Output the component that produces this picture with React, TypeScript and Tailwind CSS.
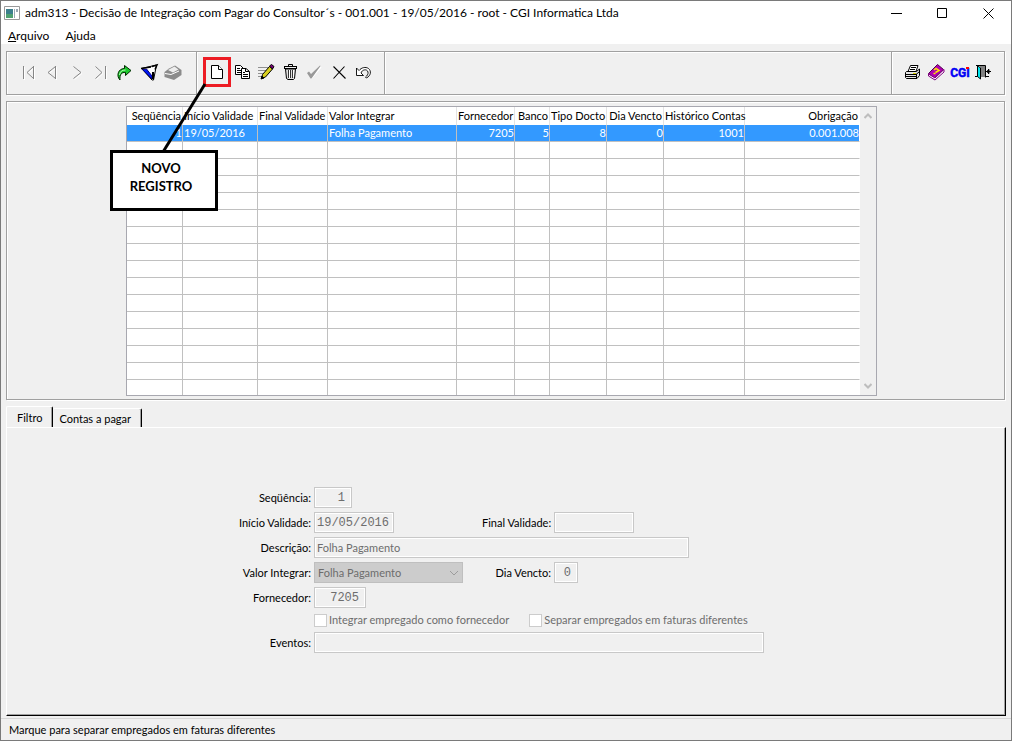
import React, { useState } from 'react';

interface Column {
  label: string;
  width: string;
  numeric?: boolean;
}

interface IconButtonProps {
  label: string;
  children: React.ReactNode;
  highlighted?: boolean;
}

const columns: Column[] = [
  { label: 'Seqüência', width: 'w-[56px]', numeric: true },
  { label: 'Início Validade', width: 'w-[75px]' },
  { label: 'Final Validade', width: 'w-[70px]' },
  { label: 'Valor Integrar', width: 'w-[129px]' },
  { label: 'Fornecedor', width: 'w-[58px]', numeric: true },
  { label: 'Banco', width: 'w-[35px]', numeric: true },
  { label: 'Tipo Docto', width: 'w-[57px]', numeric: true },
  { label: 'Dia Vencto', width: 'w-[57px]', numeric: true },
  { label: 'Histórico Contas', width: 'w-[81px]', numeric: true },
  { label: 'Obrigação', width: 'w-[115px]', numeric: true },
];

const records: string[][] = [
  ['1', '19/05/2016', '', 'Folha Pagamento', '7205', '5', '8', '0', '1001', '0.001.008'],
];

const VISIBLE_ROWS = 16;

const fieldClass =
  'block h-[21px] border border-[#c8c8c8] bg-[#f0f0f0] px-0.5 text-[#6d6d6d] shadow-[inset_0_0_0_1px_#fff]';
const monoClass = "font-['Liberation_Mono',monospace] text-[12px]";

const IconButton: React.FC<IconButtonProps> = ({ label, children, highlighted }) => (
  <button type="button" aria-label={label} className="relative block h-6 w-6">
    <svg viewBox="0 0 24 24" className="h-6 w-6" fill="none" stroke="#000">
      {children}
    </svg>
    {highlighted && <span className="absolute -inset-y-[3px] -right-px -left-[3px] border-3 border-[#ed1c24]" />}
  </button>
);

const NavIcon = ({ d }: { d: string }) => (
  <>
    <path d={d} stroke="#fff" transform="translate(1 1)" />
    <path d={d} stroke="#868686" />
  </>
);

const NavigationTools = () => (
  <div className="flex items-center border-r border-[#a0a0a0] pr-3 pb-0.5 pl-[9px] shadow-[1px_0_0_#fff]">
    <IconButton label="Primeiro">
      <NavIcon d="M7.500 6v13M17.500 6v13M17.500 6.500L11 12.500L17.500 18.500" />
    </IconButton>
    <IconButton label="Anterior">
      <NavIcon d="M15.500 6v13M15.500 6.500L8 12.500L15.500 18.500" />
    </IconButton>
    <IconButton label="Próximo">
      <NavIcon d="M9.500 6.500L17 12.500L9.500 18.500" />
    </IconButton>
    <IconButton label="Último">
      <NavIcon d="M7.500 6.500L14 12.500L7.500 18.500M17.500 6v13" />
    </IconButton>
    <IconButton label="Atualizar">
      <path
        d="M8 20C4 16 6 8.500 12.500 8.500V5.500L19 10.500L13.500 15.500V12.500C9.500 12 7.500 14.500 8 20Z"
        fill="#1ec92e"
        stroke="#002a00"
      />
      <path d="M7.500 15C8 11.500 10 10 13.500 10" stroke="#b4ffb4" />
    </IconButton>
    <IconButton label="Filtrar">
      <path d="M5.500 8.500L20.500 5L17.500 20H16Z" fill="#fff" />
      <path d="M6.500 9.500L10.500 9L16 16V19Z" fill="#0018f0" stroke="#000080" />
      <path d="M17 12v7" strokeWidth="2" />
      <path d="M16 6.500L21 5L19 9.500" strokeWidth="1.500" />
      <path d="M5 8.500L15 7" strokeWidth="1.500" />
    </IconButton>
    <IconButton label="Imprimir seleção">
      <path d="M4.500 12L9 8.500L15 5.500L21.500 10V15L14 20L4.500 17Z" fill="#8b8b8b" stroke="none" />
      <path d="M8 10L14.500 6.500L18.500 9.500L13 12.500Z" fill="#ededed" stroke="none" />
      <path d="M5 13.500L11 14.500L19 11" stroke="#fff" />
    </IconButton>
  </div>
);

const EditTools = () => (
  <div className="flex items-center border-r border-[#a0a0a0] pr-2.5 pb-0.5 pl-[9px] shadow-[1px_0_0_#fff]">
    <IconButton label="Novo registro" highlighted>
      <path d="M5.500 5.500H12.500L16.500 9.500V18.500H5.500Z" fill="#fff" />
      <path d="M12.500 5.500V9.500H16.500" fill="#fff" />
    </IconButton>
    <IconButton label="Copiar">
      <path d="M5.500 5.500H10.500L13.500 8.500V14.500H5.500Z" fill="#fff" />
      <path d="M7 8.500h3M7 10.500h4M7 12.500h4" />
      <path d="M11.500 8.500H16L19.500 11.500V18.500H11.500Z" fill="#fff" />
      <path d="M15.500 8.500V11.500H19M13 12.500h2M13 14.500h5M13 16.500h5" />
    </IconButton>
    <IconButton label="Editar">
      <path d="M4 7.500h10M4 10.500h9M4 13.500h7M4 16.500h5" stroke="#909090" />
      <path d="M7.500 18.500L8.500 14.500L15.500 6.500L18.500 9L11.500 17Z" fill="#d8d020" />
      <path d="M15.500 6L17.500 4.500L20 6.500L18.500 9Z" fill="#7a007a" />
      <path d="M7 19l3-1-2-2z" fill="#000" />
    </IconButton>
    <IconButton label="Excluir">
      <path d="M10.500 6V4.500H14.500V6M6 6.500H19M6 8.500H19M18.500 6v3M6.500 6v3" />
      <path d="M7.500 9L8.500 18.500L10 19.500H15.500L16.500 18.500L17.500 9Z" fill="#e0e0e0" />
      <path d="M10.500 10v8M12.500 10v8M14.500 10v8" stroke="#333" />
      <path d="M11.500 10v8M15.500 10v7" stroke="#fff" />
    </IconButton>
    <IconButton label="Confirmar">
      <path d="M6.500 14L9.500 18L19 7" stroke="#fff" strokeWidth="1.500" />
      <path d="M5 13L7 11.500L9 14L18 5.500L18.500 6L9.500 18.500L8.500 18.500Z" fill="#999" stroke="none" />
    </IconButton>
    <IconButton label="Cancelar">
      <path d="M7.500 6.500L19.500 18.500M18.500 6.500L7.500 18.500" strokeWidth="1.100" />
    </IconButton>
    <IconButton label="Desfazer">
      <path
        d="M6.500 8v7.500H13.500L11 13C12 9.500 17 8.500 18 12C18.500 14 17 16 15.500 17L16.500 18C21 15.500 21.500 11 18.500 8.500C15.500 6.500 11.500 7.500 9 10.500Z"
        fill="#fff"
        strokeWidth=".9"
      />
    </IconButton>
  </div>
);

const SystemTools = () => (
  <div className="flex items-center border-l border-[#a0a0a0] px-2 pb-0.5 shadow-[inset_1px_0_0_#fff]">
    <IconButton label="Imprimir">
      <path d="M8 11.500L10.500 5.500H18L16 11.500Z" fill="#fff" />
      <path d="M11 7.500h5M10 9.500h5" />
      <path d="M6.500 11.500H16.500L19.500 9V15.500L17 18.500H6.500L5.500 17.500V12.500Z" fill="#e6e6e6" />
      <path d="M6 14.500H16L19 12M16.500 14v4M6 16.500H16" />
      <path d="M13 13.500h3" stroke="#d8d000" />
    </IconButton>
    <IconButton label="Ajuda">
      <path d="M4.500 13.500L13.500 4.500L19.500 9.500L10.500 18Z" fill="#b000b0" stroke="#500050" />
      <path d="M4.500 14V16L11 20L20 12V9.500L11 18Z" fill="#fff" stroke="#800080" />
      <path d="M10 10L12 8.500L15 10.500L11.500 12.500M9.500 13.500h2" stroke="#ffe800" strokeWidth="1.500" />
    </IconButton>
    <IconButton label="CGI">
      <text
        x="12"
        y="17"
        textAnchor="middle"
        className="font-['Roboto',sans-serif] text-[12px] font-bold"
        fill="#0000f5"
        stroke="#0000f5"
        strokeWidth=".5"
      >
        CGI
      </text>
      <path d="M18 7h3v2h-3z" fill="#f00" stroke="none" />
    </IconButton>
    <IconButton label="Sair">
      <path d="M4 5.500H13.500V17.500M3 16.500H17" />
      <path d="M8 6H13V17H8Z" fill="#808080" stroke="none" />
      <path d="M5.500 5.500L8.500 8V19L5.500 16.500Z" fill="#00e5ee" />
      <path d="M14 11.500H19M16.500 9V14M14.500 11.500L17 9.500V13.500Z" />
    </IconButton>
  </div>
);

const RecordTable = () => (
  <div className="flex border border-[#a8a8b0] bg-white">
    <table className="w-[733px] table-fixed border-separate border-spacing-0">
      <thead>
        <tr className="h-[18px]">
          {columns.map((column) => (
            <th
              key={column.label}
              className={`${column.width} border-r border-[#e3e3e3] p-0 px-px leading-4 font-normal whitespace-nowrap last:border-white ${
                column.numeric ? 'text-right' : 'text-left'
              }`}
            >
              {column.label}
            </th>
          ))}
        </tr>
      </thead>
      <tbody>
        {Array.from({ length: VISIBLE_ROWS }, (_, row) => {
          const record = records[row];
          const isLast = row === VISIBLE_ROWS - 1;
          return (
            <tr
              key={row}
              className={`${isLast ? 'h-[15px]' : 'h-[17px]'} ${record ? 'bg-[#3399ff] text-white' : ''}`}
            >
              {columns.map((column, i) => (
                <td
                  key={column.label}
                  className={`border-r border-[#c0c0c0] p-0 leading-4 whitespace-nowrap last:border-r-white ${
                    isLast ? '' : 'border-b'
                  } ${column.numeric ? 'text-right' : 'pl-px text-left'}`}
                >
                  {record?.[i]}
                </td>
              ))}
            </tr>
          );
        })}
      </tbody>
    </table>
    <div className="flex w-4 flex-col items-center justify-between bg-[#f0f0f0] py-1.5">
      <svg viewBox="0 0 8 6" className="h-1.5 w-2" fill="none" stroke="#bdbdbd" strokeWidth="2">
        <path d="M0.500 5L4 1.500L7.500 5" />
      </svg>
      <svg viewBox="0 0 8 6" className="h-1.5 w-2" fill="none" stroke="#bdbdbd" strokeWidth="2">
        <path d="M0.500 1L4 4.500L7.500 1" />
      </svg>
    </div>
  </div>
);

const FilterForm = () => (
  <form className="mx-auto grid w-[528px] grid-cols-[75px_165px_69px_1fr] items-center gap-x-[3px] gap-y-1">
    <label htmlFor="sequencia" className="text-right whitespace-nowrap">Seqüência:</label>
    <input id="sequencia" disabled defaultValue="1" className={`${fieldClass} ${monoClass} col-span-3 w-[38px] pr-1.5 text-right`} />

    <label htmlFor="inicio" className="text-right whitespace-nowrap">Início Validade:</label>
    <input id="inicio" disabled defaultValue="19/05/2016" className={`${fieldClass} ${monoClass} w-20`} />
    <label htmlFor="final" className="text-right whitespace-nowrap">Final Validade:</label>
    <input id="final" disabled className={`${fieldClass} ${monoClass} w-20`} />

    <label htmlFor="descricao" className="text-right whitespace-nowrap">Descrição:</label>
    <input id="descricao" disabled defaultValue="Folha Pagamento" className={`${fieldClass} col-span-3 w-[375px]`} />

    <label htmlFor="valor" className="text-right whitespace-nowrap">Valor Integrar:</label>
    <div className="relative w-[149px]">
      <select
        id="valor"
        disabled
        className="block h-[21px] w-full appearance-none border border-[#bfbfbf] bg-[#cccccc] px-[3px] text-[#6d6d6d] opacity-100"
      >
        <option>Folha Pagamento</option>
      </select>
      <svg viewBox="0 0 10 6" className="absolute top-2 right-1 h-1.5 w-2.5" fill="none" stroke="#9c9c9c">
        <path d="M1 1L5 5L9 1" />
      </svg>
    </div>
    <label htmlFor="dia" className="text-right whitespace-nowrap">Dia Vencto:</label>
    <input id="dia" disabled defaultValue="0" className={`${fieldClass} ${monoClass} w-6 pr-1.5 text-right`} />

    <label htmlFor="fornecedor" className="text-right whitespace-nowrap">Fornecedor:</label>
    <input id="fornecedor" disabled defaultValue="7205" className={`${fieldClass} ${monoClass} col-span-3 w-[52px] pr-1.5 text-right`} />

    <div className="col-span-3 col-start-2 flex h-4 items-center gap-5 text-[#6d6d6d]">
      <label className="flex items-center gap-0.5 whitespace-nowrap">
        <input type="checkbox" disabled className="h-[13px] w-[13px] appearance-none border border-[#cccccc] bg-white" />
        Integrar empregado como fornecedor
      </label>
      <label className="flex items-center gap-0.5 whitespace-nowrap">
        <input type="checkbox" disabled className="h-[13px] w-[13px] appearance-none border border-[#cccccc] bg-white" />
        Separar empregados em faturas diferentes
      </label>
    </div>

    <label htmlFor="eventos" className="text-right whitespace-nowrap">Eventos:</label>
    <input id="eventos" disabled className={`${fieldClass} col-span-3 w-full`} />
  </form>
);

const App: React.FC = () => {
  const [activeTab, setActiveTab] = useState('Filtro');

  return (
    <div className="relative flex min-h-screen flex-col border border-[#7a7a7a] bg-[#f0f0f0] font-['Lato',sans-serif] text-[11px] leading-4 text-black">
      <header className="bg-white text-[12px]">
        <div className="flex h-6 items-center">
          <svg viewBox="0 0 16 14" className="ml-[3px] h-3.5 w-4">
            <path d="M.5.5h15v13H.5z" fill="#fff" stroke="#999" />
            <path d="M2 3h7v9H2z" fill="#3c7f8c" />
            <path d="M2 8h7v4H2z" fill="#4fa070" />
            <path d="M10 3h1v9h-1zM12 3h2v3h-2z" fill="#9aa8b5" />
          </svg>
          <h1 className="ml-[5px] whitespace-nowrap">
            adm313 - Decisão de Integração com Pagar do Consultor´s - 001.001 - 19/05/2016 - root - CGI Informatica Ltda
          </h1>
          <div className="ml-auto flex">
            <button type="button" aria-label="Minimizar" className="flex h-6 w-[46px] items-center justify-center">
              <svg viewBox="0 0 11 11" className="h-[11px] w-[11px]" stroke="#000"><path d="M0 5.500h11" /></svg>
            </button>
            <button type="button" aria-label="Maximizar" className="flex h-6 w-[46px] items-center justify-center">
              <svg viewBox="0 0 11 11" className="h-[11px] w-[11px]" fill="none" stroke="#000"><path d="M.5.5h9v9h-9z" /></svg>
            </button>
            <button type="button" aria-label="Fechar" className="flex h-6 w-[46px] items-center justify-center">
              <svg viewBox="0 0 11 11" className="h-[11px] w-[11px]" stroke="#000"><path d="M.5.5l10 10M10.500.5l-10 10" /></svg>
            </button>
          </div>
        </div>
        <nav className="flex h-[19px] items-center gap-4 pt-0.5 pl-[7px]">
          <button type="button"><span className="underline">A</span>rquivo</button>
          <button type="button">Ajuda</button>
        </nav>
      </header>

      <main className="flex flex-1 flex-col px-[5px] pt-[7px]">
        <div className="mr-px flex h-11 border border-[#a0a0a0] shadow-[inset_1px_1px_0_#fff,1px_1px_0_#fff]">
          <NavigationTools />
          <EditTools />
          <div className="flex-1" />
          <SystemTools />
        </div>

        <section className="mt-1.5 mr-px flex justify-center border border-[#a0a0a0] pt-1 pr-2 pb-[3px] shadow-[inset_1px_1px_0_#fff,1px_1px_0_#fff]">
          <RecordTable />
        </section>

        <div role="tablist" className="mt-1.5 flex items-end">
          {['Filtro', 'Contas a pagar'].map((tab) => (
            <button
              key={tab}
              type="button"
              role="tab"
              aria-selected={activeTab === tab}
              onClick={() => setActiveTab(tab)}
              className={`rounded-t-[2px] border-t border-r border-t-white border-r-black pt-px shadow-[inset_-1px_0_0_#a0a0a0] ${
                activeTab === tab ? 'h-[21px] border-l border-l-white px-2.5' : 'h-[19px] pr-2.5 pl-1.5'
              }`}
            >
              {tab}
            </button>
          ))}
        </div>
        <section className="flex-1 border border-t-white border-r-black border-b-black border-l-white pt-[59px] pr-3 pb-10 shadow-[inset_-1px_-1px_0_#a0a0a0]">
          <FilterForm />
        </section>
      </main>

      <footer className="mt-0.5 flex h-[22px] items-center border-t border-[#d7d7d7] pl-2">
        Marque para separar empregados em faturas diferentes
      </footer>

      <svg viewBox="0 0 46 70" className="pointer-events-none absolute top-[82px] left-[160px] h-[70px] w-[46px]" stroke="#000" strokeWidth="3">
        <path d="M44 1L2 69" />
      </svg>
      <div className="absolute top-[149px] left-[109px] h-[61px] w-[108px] border-3 border-black bg-white pt-1.5 pr-1.5 text-center text-[13px] leading-[18px] font-bold">
        NOVO
        <br />
        REGISTRO
      </div>
    </div>
  );
};

export default App;
